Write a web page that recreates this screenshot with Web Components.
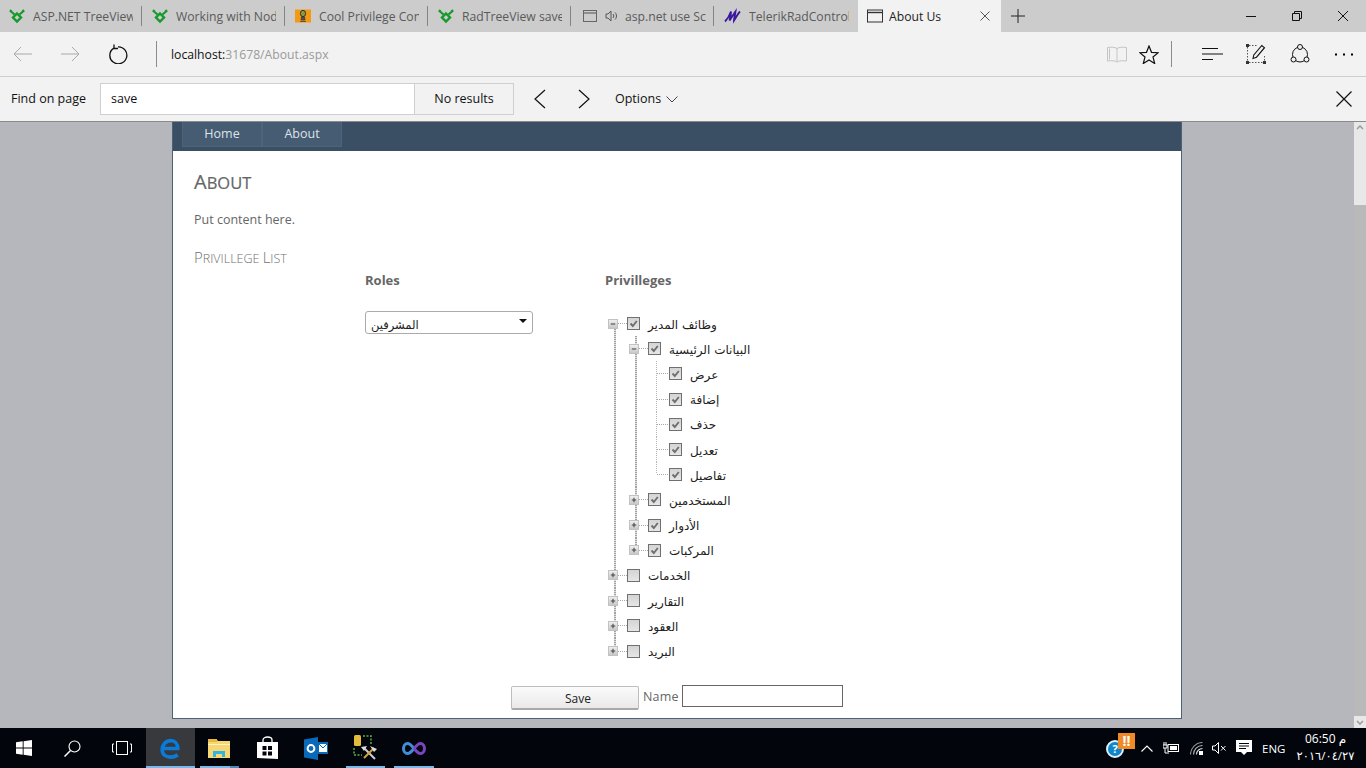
<!DOCTYPE html>
<html lang="en">
<head>
<meta charset="utf-8">
<title>About Us</title>
<style>
    html, body { margin: 0; height: 100%; overflow: hidden; }
    body {
        display: flex;
        flex-direction: column;
        width: 1366px;
        height: 768px;
        font-family: "Open Sans", "DejaVu Sans", sans-serif;
    }
</style>
</head>
<body>
<tab-strip>
    <browser-tab icon="green" label="ASP.NET TreeView"></browser-tab>
    <browser-tab icon="green" label="Working with Nod"></browser-tab>
    <browser-tab icon="orange" label="Cool Privilege Con"></browser-tab>
    <browser-tab icon="green" label="RadTreeView save"></browser-tab>
    <browser-tab icon="sound" label="asp.net use Sc"></browser-tab>
    <browser-tab icon="script" label="TelerikRadControl"></browser-tab>
    <browser-tab icon="window" label="About Us" active></browser-tab>
</tab-strip>
<nav-bar></nav-bar>
<find-bar></find-bar>
<page-view>
    <about-page>
        <role-select slot="roles" value="المشرفين"></role-select>
        <div slot="tree">
            <tree-node label="وظائف المدير" checked open first>
                <tree-node label="البيانات الرئيسية" checked open>
                    <tree-node label="عرض" checked leaf first></tree-node>
                    <tree-node label="إضافة" checked leaf></tree-node>
                    <tree-node label="حذف" checked leaf></tree-node>
                    <tree-node label="تعديل" checked leaf></tree-node>
                    <tree-node label="تفاصيل" checked leaf last></tree-node>
                </tree-node>
                <tree-node label="المستخدمين" checked></tree-node>
                <tree-node label="الأدوار" checked></tree-node>
                <tree-node label="المركبات" checked last></tree-node>
            </tree-node>
            <tree-node label="الخدمات"></tree-node>
            <tree-node label="التقارير"></tree-node>
            <tree-node label="العقود"></tree-node>
            <tree-node label="البريد" last></tree-node>
        </div>
    </about-page>
</page-view>
<task-bar></task-bar>

<script>
const line = (d, w = 1, c = 'currentColor') => `<path d="${d}" fill="none" stroke="${c}" stroke-width="${w}"/>`;
const svg = (size, box, body, h = size) => `<svg width="${size}" height="${h}" viewBox="0 0 ${box}" style="display:block;flex:none">${body}</svg>`;

const tabIcons = {
    green: svg(16, '16 16', line('M2 3.500 5.500 6.500M14 3.500 10.500 6.500M2.500 2 1 4M13.500 2 15 4', 2.200, '#149a2a') + line('M8 5.500 12 9.500 8 13.500 4 9.500z', 2.400, '#149a2a')),
    orange: svg(16, '16 14', `<rect width="16" height="13" y="0.5" fill="#f39a12"/><ellipse cx="8" cy="4.500" rx="2.600" ry="3.200" fill="#8b9a3c" stroke="#333"/><path d="M6.500 8h3l.5 3H6zM5 12.500h6" fill="#555" stroke="#333" stroke-width=".7"/>`),
    window: svg(16, '16 13', `<rect x=".5" y=".5" width="15" height="12" fill="none" stroke="#333"/><path d="M1 3h14" stroke="#333" stroke-width="1.400"/>`),
    sound: svg(14, '14 12', `<rect x=".5" y=".5" width="13" height="11" fill="none" stroke="#666"/><path d="M1 3h12" stroke="#666" stroke-width="1.200"/>`),
    script: svg(17, '17 14', line('M1 12C4 9 6 5 7 2 7 6 6 9 5.500 11 7.500 8 10 4 11.500 2 11 6 10 9 10 11 12 8 14 4 16 2', 1.900, '#3a1a9c'))
};

class BrowserTab extends HTMLElement {
    constructor() {
        super();
        this.attachShadow({ mode: 'open' });
    }
    connectedCallback() {
        const active = this.hasAttribute('active');
        const icon = this.getAttribute('icon');
        const speaker = icon === 'sound'
            ? svg(12, '12 12', `<path d="M1 4h2l3-3v10L3 8H1z" fill="none" stroke="#555"/>` + line('M8 4c1 1 1 3 0 4M10 2.500c2 2 2 5 0 7', 1, '#555'))
            : '';
        this.shadowRoot.innerHTML = `
            <style>
                :host { display: block; flex: none; width: 143px; height: 32px; }
                .tab {
                    box-sizing: border-box;
                    height: 32px;
                    display: flex;
                    align-items: center;
                    gap: 8px;
                    padding-left: 9px;
                    color: #5a5a5a;
                    font-size: 12.200px;
                    position: relative;
                }
                .tab.on { background: #f2f2f2; color: #222; gap: 6px; }
                .tab:not(.on)::after {
                    content: "";
                    position: absolute;
                    right: 1px;
                    top: 6px;
                    height: 20px;
                    width: 1px;
                    background: #858585;
                }
                .sp { margin-left: 0; }
                .name { width: ${active ? 85 : icon === 'sound' ? 84 : 100}px; overflow: hidden; white-space: nowrap; }
                :host([icon="sound"]) .tab { padding-left: 11px; }
                :host([icon="script"]) .tab::after { display: none; }
                .x { color: #555; }
            </style>
            <div class="tab ${active ? 'on' : ''}">
                ${tabIcons[icon]}
                ${speaker ? `<span class="sp">${speaker}</span>` : ''}
                <span class="name">${this.getAttribute('label')}</span>
                ${active ? `<span class="x">${svg(10, '10 10', line('M.5.500l9 9M9.500.500l-9 9'))}</span>` : ''}
            </div>`;
    }
}
customElements.define('browser-tab', BrowserTab);

class TabStrip extends HTMLElement {
    constructor() {
        super();
        this.attachShadow({ mode: 'open' });
    }
    connectedCallback() {
        this.shadowRoot.innerHTML = `
            <style>
                :host { display: flex; flex: none; height: 32px; background: #cccccc; align-items: stretch; }
                .plus { margin: 9px 0 0 10px; color: #222; }
                .win { margin-left: auto; display: flex; color: #111; }
                .win span { width: 46px; display: flex; align-items: center; justify-content: center; }
            </style>
            <slot></slot>
            <div class="plus">${svg(14, '14 14', line('M7 0v14M0 7h14'))}</div>
            <div class="win">
                <span>${svg(10, '10 10', line('M0 5.500h10'))}</span>
                <span>${svg(10, '10 10', line('M.5 2.500h7v7h-7zM2.500 2V.5h7v7H8'))}</span>
                <span>${svg(10, '10 10', line('M0 0l10 10M10 0L0 10'))}</span>
            </div>`;
    }
}
customElements.define('tab-strip', TabStrip);

class NavBar extends HTMLElement {
    constructor() {
        super();
        this.attachShadow({ mode: 'open' });
    }
    connectedCallback() {
        const knob = (x, y) => `<rect x="${x}" y="${y}" width="3" height="3" fill="#333"/>`;
        const node = (x, y) => `<circle cx="${x}" cy="${y}" r="2.500" fill="#f2f2f2" stroke="#111"/>`;
        this.shadowRoot.innerHTML = `
            <style>
                :host {
                    display: flex;
                    flex: none;
                    box-sizing: border-box;
                    height: 45px;
                    align-items: center;
                    background: #f2f2f2;
                    border-bottom: 1px solid #cdcdcd;
                    color: #111;
                }
                .sep { width: 1px; height: 26px; background: #8c8c8c; flex: none; }
                .url { margin-left: 14px; font-size: 12.200px; color: #9a9a9a; }
                .url b { font-weight: 400; color: #111; }
                .end { margin-left: auto; display: flex; align-items: center; }
            </style>
            <div style="margin-left:13px;color:#a8a8a8">${svg(19, '19 16', line('M19 8H1M8 1 1 8l7 7'), 16)}</div>
            <div style="margin-left:29px;color:#a8a8a8">${svg(19, '19 16', line('M0 8h18M11 1l7 7-7 7'), 16)}</div>
            <div style="margin-left:28px">${svg(20, '20 20', line('M5.800 4.100a8.500 8.500 0 1 0 4.200-1.300M6 .5V4.500h4', 1.300))}</div>
            <div class="sep" style="margin-left:28px"></div>
            <div class="url"><b>localhost:</b>31678/About.aspx</div>
            <div class="end">
                <div style="color:#c4c4c4">${svg(20, '20 17', line('M10 2.500C8 1 4 1 .5 1.500v13.500c3.500-.5 7.500-.5 9.500 1 2-1.500 6-1.500 9.500-1V1.500C16 1 12 1 10 2.500zM10 2.500V16M2.500 2.500v11'), 17)}</div>
                <div style="margin-left:12px">${svg(20, '20 19', line('M10 1l2.500 6.300 6.700.4-5.200 4.300 1.700 6.500L10 15l-5.700 3.500L6 12 .8 7.700l6.700-.4z', 1.200), 19)}</div>
                <div class="sep" style="margin-left:12px"></div>
                <div style="margin-left:30px">${svg(21, '21 14', line('M0 1.500h16M0 7h21M0 12.500h11'), 14)}</div>
                <div style="margin-left:23px">${svg(20, '20 20', `<path d="M1.500 3v14M3 18.500h14M3 1.500h9M18.500 12v5" fill="none" stroke="#555" stroke-dasharray="1.500 1.500"/>` + knob(0, 0) + knob(0, 17) + knob(17, 17) + line('M7 14.500l.8-3.500 8-9.500 2.700 2.200-8 9.500z', 1.100))}</div>
                <div style="margin-left:24px">${svg(20, '20 20', `<circle cx="10" cy="10.500" r="7.500" fill="none" stroke="#111"/>` + node(10, 3) + node(3.500, 15.500) + node(16.500, 15.500))}</div>
                <div style="margin:0 13px 0 25px">${svg(18, '18 3', `<rect width="2" height="2" y=".5"/><rect x="8" width="2" height="2" y=".5"/><rect x="16" width="2" height="2" y=".5"/>`, 3)}</div>
            </div>`;
    }
}
customElements.define('nav-bar', NavBar);

class FindBar extends HTMLElement {
    constructor() {
        super();
        this.attachShadow({ mode: 'open' });
    }
    connectedCallback() {
        this.shadowRoot.innerHTML = `
            <style>
                :host {
                    display: flex;
                    flex: none;
                    box-sizing: border-box;
                    height: 45px;
                    align-items: center;
                    background: #f2f2f2;
                    border-bottom: 1px solid #8a8a8a;
                    font-size: 12.500px;
                    color: #111;
                }
                .lbl { margin: -2px 0 0 11px; width: 89px; }
                .box {
                    box-sizing: border-box;
                    width: 315px;
                    height: 32px;
                    background: #fff;
                    border: 1px solid #cfcfcf;
                    padding-left: 10px;
                    line-height: 29px;
                }
                .res {
                    box-sizing: border-box;
                    width: 100px;
                    height: 32px;
                    margin-left: -1px;
                    border: 1px solid #cfcfcf;
                    text-align: center;
                    line-height: 29px;
                }
                .end { margin: 0 14px 0 auto; }
            </style>
            <span class="lbl">Find on page</span>
            <div class="box">save</div>
            <div class="res">No results</div>
            <div style="margin-left:19px">${svg(13, '13 20', line('M12 1 2 10l10 9', 1.200), 20)}</div>
            <div style="margin-left:32px">${svg(13, '13 20', line('M1 1l10 9-10 9', 1.200), 20)}</div>
            <span style="margin:-2px 0 0 24px">Options</span>
            <div style="margin-left:5px;color:#444">${svg(12, '12 7', line('M.5.500 6 6l5.500-5.500'), 7)}</div>
            <div class="end">${svg(16, '16 16', line('M.5.500l15 15M15.500.500l-15 15', 1.200))}</div>`;
    }
}
customElements.define('find-bar', FindBar);

class PageView extends HTMLElement {
    constructor() {
        super();
        this.attachShadow({ mode: 'open' });
    }
    connectedCallback() {
        this.shadowRoot.innerHTML = `
            <style>
                :host { display: flex; flex: 1; min-height: 0; background: #b6b7bc; }
                .main { flex: 1; display: flex; padding: 0 0 9px 172px; min-width: 0; }
                .bar { width: 12px; flex: none; display: flex; flex-direction: column; background: #e8e8e8; color: #9a9a9a; }
                .up { height: 83px; padding: 3px 0 0 2px; box-sizing: border-box; }
                .thumb { flex: 1; background: #b9b9b9; }
                .dn { height: 12px; padding: 4px 0 0 2px; box-sizing: border-box; }
            </style>
            <div class="main"><slot></slot></div>
            <div class="bar">
                <div class="up">${svg(8, '8 5', line('M1 4 4 1l3 3', 1.500), 5)}</div>
                <div class="thumb"></div>
                <div class="dn">${svg(8, '8 5', line('M1 1l3 3 3-3', 1.500), 5)}</div>
            </div>`;
    }
}
customElements.define('page-view', PageView);

class AboutPage extends HTMLElement {
    constructor() {
        super();
        this.attachShadow({ mode: 'open' });
    }
    connectedCallback() {
        this.shadowRoot.innerHTML = `
            <style>
                :host {
                    display: block;
                    box-sizing: border-box;
                    width: 1010px;
                    background: #fff;
                    border: 1px solid #4b6178;
                    border-top: 0;
                    color: #666;
                    font-size: 12.500px;
                }
                .menu { height: 29px; background: #3a4f64; display: flex; padding-left: 9px; }
                .menu a {
                    box-sizing: border-box;
                    width: 80px;
                    height: 25px;
                    background: #465c73;
                    border: 1px solid #4d647b;
                    border-top: 0;
                    color: #dde3e9;
                    font-size: 12.500px;
                    text-align: center;
                    line-height: 23px;
                }
                .body { padding-left: 21px; }
                h2 {
                    margin: 19px 0 0;
                    height: 24px;
                    line-height: 24px;
                    font-size: 16.500px;
                    font-weight: 400;
                    text-transform: uppercase;
                    -webkit-text-stroke: .2px #666;
                }
                h2 span { font-size: 20px; }
                p { margin: 17px 0 0; height: 18px; line-height: 18px; }
                h3 {
                    margin: 19px 0 0;
                    height: 18px;
                    line-height: 18px;
                    font-size: 12.500px;
                    font-weight: 300;
                    color: #707070;
                    text-transform: uppercase;
                }
                h3 span { font-size: 15px; }
                .cols { display: grid; grid-template-columns: 240px auto; padding-left: 171px; margin-top: 5px; }
                .head { font-size: 13px; font-weight: 700; height: 18px; line-height: 18px; margin-bottom: 22px; }
                .save { display: flex; align-items: flex-start; padding-left: 317px; margin-top: 21.300px; }
                .btn {
                    box-sizing: border-box;
                    width: 128px;
                    height: 24px;
                    margin-top: 1px;
                    padding-left: 6px;
                    background: linear-gradient(#fbfbfb, #e9e9e9);
                    border: 1px solid #bdbdbd;
                    border-bottom: 2px solid #a9a9a9;
                    border-radius: 2px;
                    color: #222;
                    font-size: 12px;
                    text-align: center;
                    line-height: 24px;
                }
                .nm { margin-left: 4px; width: 39px; line-height: 24px; letter-spacing: .2px; }
                .in { box-sizing: border-box; width: 161px; height: 22px; border: 1px solid #666; background: #fff; }
            </style>
            <div class="menu"><a>Home</a><a>About</a></div>
            <div class="body">
                <h2><span>A</span>bout</h2>
                <p>Put content here.</p>
                <h3><span>P</span>rivillege <span>L</span>ist</h3>
                <div class="cols">
                    <div><div class="head">Roles</div><slot name="roles"></slot></div>
                    <div><div class="head">Privilleges</div><slot name="tree"></slot></div>
                </div>
                <div class="save">
                    <div class="btn">Save</div>
                    <span class="nm">Name</span>
                    <div class="in"></div>
                </div>
            </div>`;
    }
}
customElements.define('about-page', AboutPage);

class RoleSelect extends HTMLElement {
    constructor() {
        super();
        this.attachShadow({ mode: 'open' });
    }
    connectedCallback() {
        this.shadowRoot.innerHTML = `
            <style>
                :host {
                    display: flex;
                    box-sizing: border-box;
                    width: 168px;
                    height: 23px;
                    border: 1px solid #ababab;
                    border-radius: 3px;
                    align-items: center;
                    justify-content: space-between;
                    padding: 5px 5px 0 5px;
                    font: 11.500px "DejaVu Sans", sans-serif;
                    color: #222;
                }
                i { border: 4px solid transparent; border-top: 4px solid #111; border-bottom: 0; margin-top: -9px; }
            </style>
            <span dir="rtl">${this.getAttribute('value')}</span><i></i>`;
    }
}
customElements.define('role-select', RoleSelect);

class TreeNode extends HTMLElement {
    constructor() {
        super();
        this.attachShadow({ mode: 'open' });
    }
    connectedCallback() {
        const leaf = this.hasAttribute('leaf');
        const open = this.hasAttribute('open');
        const checked = this.hasAttribute('checked');
        const glyph = open ? 'M2 4.500h5' : 'M2 4.500h5M4.500 2v5';
        this.shadowRoot.innerHTML = `
            <style>
                :host { display: block; position: relative; }
                :host::before {
                    content: "";
                    position: absolute;
                    left: 9px;
                    top: 0;
                    bottom: 0;
                    width: 2px;
                    background: repeating-linear-gradient(#a3a3a3 0 1px, #dedede 1px 2px);
                }
                :host([leaf])::before { width: 1px; background: repeating-linear-gradient(#b5b5b5 0 1px, #fff 1px 2px); }
                :host([first])::before { top: 12px; }
                :host([leaf][first])::before { top: 0; }
                :host([last])::before { bottom: auto; height: 12px; }
                .row { display: flex; align-items: center; height: 25.200px; position: relative; }
                .tog {
                    box-sizing: border-box;
                    width: 10px;
                    height: 10px;
                    margin: 0 0 0 3px;
                    background: linear-gradient(#efefef, #c8c8c8);
                    border: 1px solid #c2c2c2;
                    color: #444;
                    flex: none;
                    position: relative;
                }
                .dash {
                    width: 9px;
                    height: 1px;
                    flex: none;
                    background: repeating-linear-gradient(90deg, #a8a8a8 0 1px, #fff 1px 2px);
                }
                .leafdash { width: 12px; margin-left: 10px; }
                .chk {
                    box-sizing: border-box;
                    width: 13px;
                    height: 13px;
                    flex: none;
                    border: 1px solid #707070;
                    background: linear-gradient(#d4d4d4, #e6e6e6);
                }
                .txt { margin: 2px 0 0 8px; font: 12px "DejaVu Sans", sans-serif; color: #222; white-space: nowrap; }
                .kids { margin-left: 21px; }
            </style>
            <div class="row">
                ${leaf
                    ? '<span class="dash leafdash"></span>'
                    : `<span class="tog">${svg(8, '9 9', line(glyph, 1.200))}</span><span class="dash"></span>`}
                <span class="chk">${checked ? svg(11, '11 11', line('M2.500 5.500 4.800 8 8.800 3', 1.900, '#6f6f6f')) : ''}</span>
                <span class="txt" dir="rtl">${this.getAttribute('label')}</span>
            </div>
            <div class="kids"><slot></slot></div>`;
    }
}
customElements.define('tree-node', TreeNode);

const appIcons = [
    svg(22, '24 24', line('M5.500 12.500H20.500C20.500 7 17 4 13 4 7.500 4 3.500 8.500 3.500 14 3.500 19 7.500 22 12.500 22 15.500 22 18 21.200 20.500 19.500', 4, '#0a7bd6')),
    svg(22, '22 20', `<path d="M0 1h8l2 2h12v17H0z" fill="#f7d674"/><path d="M0 1h9v3H0z" fill="#e8b93f"/><path d="M0 6h22v1H0z" fill="#fff3c4"/><path d="M5 19v-6h12v6h-3v-3H8v3z" fill="#2fb4e6"/>`, 20),
    svg(21, '21 24', `<path d="M6 6V4c0-4 9-4 9 0v2" fill="none" stroke="#fff" stroke-width="1.300"/><path d="M0 6h21v17l-21-1z" fill="#fff"/><path d="M5.500 10h4v4h-4zM11 10h4v4h-4zM5.500 15.500h4v4h-4zM11 15.500h4v4h-4z" fill="#02050b"/>`, 24),
    svg(24, '24 23', `<path d="M0 2.500 14 0v23L0 20.500z" fill="#0a6ab8"/><rect x="14" y="5" width="10" height="12" fill="#0a6ab8"/><path d="M15 7h8v8h-8z" fill="#fff"/><path d="M15 7l4 4 4-4" fill="none" stroke="#0a6ab8"/><circle cx="7" cy="11.500" r="3.400" fill="none" stroke="#fff" stroke-width="2"/>`, 23),
    svg(24, '24 26', `<rect x="1" y="0" width="7" height="11" rx="1.500" fill="#e4bb3c"/><path d="M10 1h8v8M1 13v7h8" fill="none" stroke="#58b04a" stroke-dasharray="2 1.500" stroke-width="1.500"/><path d="M11 13l11 11" stroke="#cfcfcf" stroke-width="2"/><path d="M21 13 11 23" stroke="#d7a23b" stroke-width="2"/><path d="M17 11l7 3-3 3zM8 12l6-1-3 5z" fill="#dcdcdc"/>`, 26),
    svg(24, '24 13', line('M12 6.500C9 2.500 7 1.500 5.500 1.500 3 1.500 1.500 4 1.500 6.500S3 11.500 5.500 11.500c2.500 0 4.500-2.500 6.500-5', 3, '#3f8fd8') + line('M12 6.500c2 2.500 4 5 6.500 5 2.500 0 4-2.500 4-5s-1.500-5-4-5c-2.500 0-4.500 2.500-6.500 5', 3, '#7a45c4'), 13)
];

class TaskBar extends HTMLElement {
    constructor() {
        super();
        this.attachShadow({ mode: 'open' });
    }
    connectedCallback() {
        const w = '#fff';
        const running = [0, 1, 4, 5];
        const apps = appIcons.map((icon, i) => {
            const cls = i === 0 ? 'app cur' : 'app';
            return `<div class="${cls}">${icon}${running.includes(i) ? `<i class="${i === 1 ? 'stack' : ''}"></i>` : ''}</div>`;
        }).join('');
        this.shadowRoot.innerHTML = `
            <style>
                :host {
                    display: flex;
                    flex: none;
                    height: 40px;
                    background: #02050b;
                    color: #fff;
                    font-size: 12px;
                    align-items: stretch;
                }
                .app { width: 48.700px; display: flex; align-items: center; justify-content: center; position: relative; flex: none; }
                .sys { width: 48px; }
                .sys:nth-child(3) { margin-right: 2px; }
                .cur { background: #37393d; }
                .app i { position: absolute; left: 5px; right: 4px; bottom: 0; height: 2px; background: #76b9ed; }
                .cur i { left: 0; right: 0; }
                .app i.stack { background: linear-gradient(90deg, #76b9ed 78%, #4d87b5 78%); }
                .tray { margin-left: auto; display: flex; align-items: center; }
                .help { position: relative; width: 29px; height: 24px; margin-right: 6px; }
                .help b {
                    position: absolute;
                    left: 12px;
                    top: -3px;
                    width: 17px;
                    height: 16px;
                    background: #f08a24;
                    font-size: 14px;
                    line-height: 16px;
                    text-align: center;
                }
                .help em {
                    position: absolute;
                    left: 0;
                    top: 4px;
                    box-sizing: border-box;
                    width: 18px;
                    height: 18px;
                    border: 2px solid #dff1fb;
                    border-radius: 50%;
                    background: #0f86c9;
                    font: 700 11px/14px "Open Sans", sans-serif;
                    text-align: center;
                }
                .eng { margin-left: 10px; width: 23px; font-size: 11.500px; }
                .clock { width: 81px; text-align: center; line-height: 17px; padding-bottom: 2px; font-size: 12px; font-family: "Open Sans", "DejaVu Sans", sans-serif; }
                .clock div:last-child { font-size: 11.500px; }
            </style>
            <div class="app sys">${svg(16, '16 16', `<path d="M0 2.300 6.700 1.300V7.500H0zM7.600 1.200 16 0v7.500H7.600zM0 8.400h6.700v6.300L0 13.700zM7.600 8.400H16V16l-8.400-1.200z" fill="${w}"/>`)}</div>
            <div class="app sys">${svg(17, '17 17', `<circle cx="10.500" cy="6.500" r="5.500" fill="none" stroke="${w}" stroke-width="1.100"/>` + line('M6.500 10.500.5 16.500', 1.500, w))}</div>
            <div class="app sys">${svg(20, '20 14', `<rect x="4.500" y=".5" width="11" height="13" fill="none" stroke="${w}"/>` + line('M2 3H.5v8H2M18 3h1.500v8H18', 1, w), 14)}</div>
            ${apps}
            <div class="tray">
                <div class="help"><em>?</em><b>!!</b></div>
                <div style="margin-right:10px">${svg(12, '12 7', line('M.5 6.500 6 1l5.500 5.500', 1.100, w), 7)}</div>
                <div style="margin-right:11px">${svg(16, '16 12', `<rect x="5" y="2.500" width="10.500" height="7" fill="none" stroke="${w}"/><rect x="7" y="4" width="7" height="4" fill="${w}"/><path d="M0 3h4v3H0zM1 0v3M3 0v3M2 6v5h4" fill="none" stroke="${w}"/>`, 12)}</div>
                <div style="margin-right:9px">${svg(13, '13 13', line('M.5 12.500C.5 6 6 .5 12.500.5', 1.100, '#9a9a9a') + line('M3.500 12.500C3.500 7.500 7.500 3.500 12.500 3.500', 1.100, '#bbb') + line('M6.500 12.500c0-3.300 2.700-6 6-6', 1.100, '#ddd') + `<rect x="9" y="9" width="4" height="4" fill="${w}"/>`)}</div>
                <div style="margin-right:9px">${svg(15, '15 12', `<path d="M.5 4H3L6.500.5v11L3 8H.5z" fill="none" stroke="${w}"/>` + line('M9 4l4.500 4.500M13.500 4 9 8.500', 1, w), 12)}</div>
                <div>${svg(16, '16 16', `<path d="M0 0h16v12h-5l-3 3-3-3H0z" fill="${w}"/>` + line('M3 3.500h10M3 6h10M3 8.500h7', 1, '#02050b'))}</div>
                <span class="eng">ENG</span>
                <div class="clock"><div>06:50 م</div><div dir="ltr">٢٠١٦/٠٤/٢٧</div></div>
            </div>`;
    }
}
customElements.define('task-bar', TaskBar);
</script>
</body>
</html>
